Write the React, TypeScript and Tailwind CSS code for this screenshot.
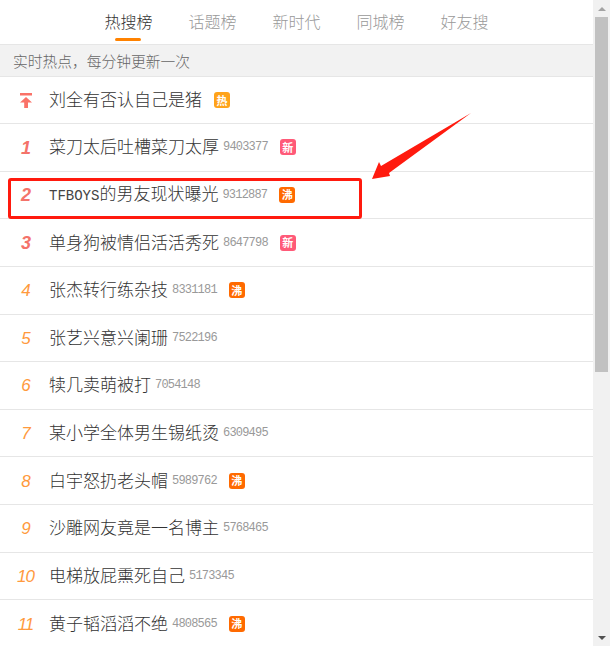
const CJK = "font-['Noto_Sans_CJK_SC','Liberation_Sans',sans-serif]";

type Item = { rank: number; title: React.ReactNode; count: string; tag?: "新" | "沸" };

const items: Item[] = [
  { rank: 1, title: "菜刀太后吐槽菜刀太厚", count: "9403377", tag: "新" },
  { rank: 2, title: <><span className="font-['Liberation_Mono',monospace] text-[14px] font-normal text-[#444444]">TFBOYS</span>的男友现状曝光</>, count: "9312887", tag: "沸" },
  { rank: 3, title: "单身狗被情侣活活秀死", count: "8647798", tag: "新" },
  { rank: 4, title: "张杰转行练杂技", count: "8331181", tag: "沸" },
  { rank: 5, title: "张艺兴意兴阑珊", count: "7522196" },
  { rank: 6, title: "犊几卖萌被打", count: "7054148" },
  { rank: 7, title: "某小学全体男生锡纸烫", count: "6309495" },
  { rank: 8, title: "白宇怒扔老头帽", count: "5989762", tag: "沸" },
  { rank: 9, title: "沙雕网友竟是一名博主", count: "5768465" },
  { rank: 10, title: "电梯放屁熏死自己", count: "5173345" },
  { rank: 11, title: "黄子韬滔滔不绝", count: "4808565", tag: "沸" },
];

function Badge({ label }: { label: "热" | "新" | "沸" }) {
  const color = label === "热" ? "bg-[#ffa31a]" : label === "新" ? "bg-[#ff5a78]" : "bg-[#ff6a00]";
  return (
    <span className={`${color} flex h-4 w-4 shrink-0 items-center justify-center rounded-[3px] text-[11px] font-bold leading-none text-white`}>
      {label}
    </span>
  );
}

function Row({ item }: { item: Item }) {
  const top = item.rank <= 3;
  return (
    <div className="flex h-[47.63px] items-center border-b border-[#e6e6e6]">
      <span
        className={`mt-[1px] w-[50px] shrink-0 pl-[1px] text-center font-['Liberation_Sans',sans-serif] italic leading-none tracking-[-1px] ${
          top ? "text-[#f4736a] text-[18px] font-bold" : "text-[#ff9a3d] text-[17px]"
        }`}
      >
        {item.rank}
      </span>
      <span className="mb-[3px] ml-[-1px] text-[17px] font-light leading-none text-[#333333]">{item.title}</span>
      <span className="ml-[4px] font-['Liberation_Mono',monospace] text-[12px] leading-none tracking-[-0.8px] text-[#999999]">{item.count}</span>
      {item.tag && <span className="ml-3"><Badge label={item.tag} /></span>}
    </div>
  );
}

export default function App() {
  const tabs = ["热搜榜", "话题榜", "新时代", "同城榜", "好友搜"];
  return (
    <div className={`relative flex h-[646px] w-[610px] overflow-hidden bg-white ${CJK}`}>
      <main className="w-[593px] shrink-0">
        <nav className="flex h-[45px] justify-center gap-9 border-b border-[#e6e6e6]">
          {tabs.map((t, i) => (
            <div key={t} className="relative flex h-full items-start pt-[13px]">
              <span className={`text-[16px] font-light leading-[17px] ${i === 0 ? "text-[#333333]" : "text-[#999999]"}`}>{t}</span>
              {i === 0 && <span className="absolute bottom-[3px] left-[11px] h-[3px] w-[26px] rounded-sm bg-[#ff8200]" />}
            </div>
          ))}
        </nav>
        <div className="flex h-[32px] items-center border-b border-[#e6e6e6] bg-[#f2f2f2] pl-[13px] text-[14.75px] font-light leading-none text-[#666666]">
          <span className="mt-[1px]">实时热点，每分钟更新一次</span>
        </div>
        <div className="flex h-[47px] items-center border-b border-[#e6e6e6]">
          <span className="flex w-[50px] shrink-0 justify-center pl-[1px]">
            <svg width="12" height="15" viewBox="0 0 12 15">
              <path d="M0 0H12V2.5H0Z M6 4 L12 9.5H8V15H4.2V9.5H0Z" fill="#fa7268" />
            </svg>
          </span>
          <span className="mb-[3px] ml-[-1px] text-[17px] font-light leading-none text-[#333333]">刘全有否认自己是猪</span>
          <span className="ml-3"><Badge label="热" /></span>
        </div>
        {items.map((item) => (
          <Row key={item.rank} item={item} />
        ))}
      </main>
      <aside className="flex w-[17px] shrink-0 flex-col bg-[#f1f1f1]">
        <div className="flex h-[17px] items-center justify-center">
          <span className="h-0 w-0 border-x-[4px] border-b-[4px] border-x-transparent border-b-[#a3a3a3]" />
        </div>
        <div className="mx-[2px] h-[355px] bg-[#c1c1c1]" />
        <div className="flex-1" />
        <div className="flex h-[17px] items-center justify-center">
          <span className="h-0 w-0 border-x-[4px] border-t-[4px] border-x-transparent border-t-[#505050]" />
        </div>
      </aside>
      <div className="absolute left-[8px] top-[178px] h-[41px] w-[354px] rounded-[3px] border-[3px] border-[#ff1a0e]" />
      <svg className="absolute left-0 top-0" width="610" height="646" viewBox="0 0 610 646">
        <path d="M471 113 L389 173 L390 176 L372 179 L379 162 L381 166 Z" fill="#ff1a0e" />
      </svg>
    </div>
  );
}
